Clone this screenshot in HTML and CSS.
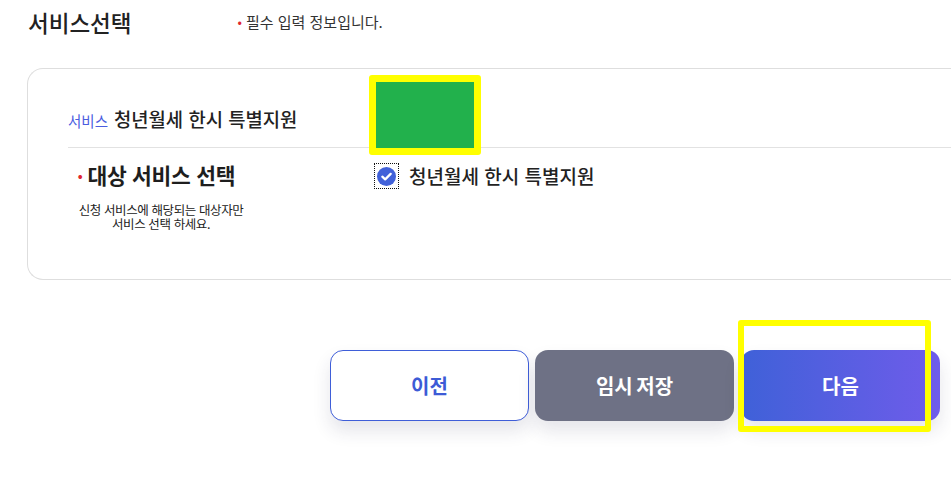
FILE: index.html
```html
<!DOCTYPE html>
<html lang="ko">
<head>
<meta charset="utf-8">
<title>서비스선택</title>
<link rel="stylesheet" href="styles.css">
</head>
<body>
<div class="page">
  <header class="head">
    <h1 class="title">서비스선택</h1>
    <p class="req"><span class="dot">•</span>필수 입력 정보입니다.</p>
  </header>

  <section class="card">
    <div class="svc"><span class="svc-tag">서비스</span>청년월세 한시 특별지원</div>
    <div class="row">
      <div class="label-col">
        <div class="label"><span class="dot">•</span>대상 서비스 선택</div>
        <p class="desc">신청 서비스에 해당되는 대상자만<br>서비스 선택 하세요.</p>
      </div>
      <label class="opt">
        <span class="chk">
          <svg viewBox="0 0 20 20" width="19" height="19" aria-hidden="true">
            <circle cx="10" cy="10" r="10" fill="#4161d9"/>
            <path d="M5.6 10.2 L8.6 13 L14.4 7.2" fill="none" stroke="#fff" stroke-width="2.4" stroke-linecap="round" stroke-linejoin="round"/>
          </svg>
        </span>
        <span class="opt-text">청년월세 한시 특별지원</span>
      </label>
    </div>
  </section>

  <div class="actions">
    <button class="btn btn-prev" type="button">이전</button>
    <button class="btn btn-save" type="button">임시 저장</button>
    <button class="btn btn-next" type="button">다음</button>
  </div>

  <div class="mark mark-green"></div>
  <div class="mark mark-next"></div>
</div>
</body>
</html>
```

FILE: styles.css
```css
html, body {
  margin: 0;
  padding: 0;
  overflow: hidden;
  background: #fff;
}
body {
  font-family: "Noto Sans CJK KR", "Noto Sans", sans-serif;
  color: #222;
}
.page {
  position: relative;
  width: 1000px;
  height: 479px;
  padding-left: 27px;
  box-sizing: border-box;
}
.head {
  display: flex;
  align-items: center;
  height: 44px;
}
.title {
  margin: 0 0 0 1px;
  font-size: 22.5px;
  font-weight: 500;
  line-height: 30px;
  color: #222;
}
.req {
  margin: 0 0 0 106px;
  font-size: 15px;
  color: #333;
  line-height: 20px;
}
.req .dot {
  color: #e0262f;
  margin-right: 4px;
  font-size: 13px;
  vertical-align: 1px;
}
.card {
  margin-top: 24px;
  height: 212px;
  border: 1px solid #dedede;
  border-right: 0;
  border-radius: 16px 0 0 16px;
  box-sizing: border-box;
  padding-left: 40px;
}
.svc {
  padding-top: 37px;
  padding-bottom: 13px;
  border-bottom: 1px solid #e2e2e2;
  font-size: 18.8px;
  font-weight: 500;
  line-height: 26px;
  color: #222;
}
.svc-tag {
  color: #4a5ddf;
  font-size: 14.5px;
  font-weight: 400;
  margin-right: 6px;
}
.row {
  display: flex;
  align-items: flex-start;
  padding-top: 14px;
}
.label-col {
  width: 186px;
  text-align: center;
}
.label {
  padding-right: 9px;
  font-size: 21.5px;
  font-weight: 700;
  line-height: 26px;
  letter-spacing: -0.3px;
  color: #1e1e1e;
}
.label .dot {
  color: #e0262f;
  font-size: 13px;
  margin-right: 5px;
  vertical-align: 3px;
}
.desc {
  margin: 14px 0 0;
  font-size: 12.5px;
  line-height: 14px;
  letter-spacing: -0.4px;
  color: #222;
}
.opt {
  display: flex;
  align-items: center;
  margin-left: 120px;
  margin-top: 1px;
}
.chk {
  display: flex;
  align-items: center;
  justify-content: center;
  width: 25px;
  height: 26px;
  box-sizing: border-box;
  border: 1px dotted #111;
}
.opt-text {
  margin-left: 10px;
  font-size: 19px;
  font-weight: 500;
  line-height: 26px;
  color: #222;
}
.actions {
  display: flex;
  gap: 6px;
  margin-top: 70px;
  padding-left: 303px;
}
.btn {
  width: 199px;
  height: 71px;
  border-radius: 13px;
  border: 0;
  font-family: inherit;
  font-size: 20px;
  font-weight: 700;
  box-shadow: 0 10px 18px rgba(40, 40, 80, 0.12);
  cursor: pointer;
}
.btn-prev {
  background: #fff;
  border: 1px solid #3f5ed8;
  color: #3d5bd6;
}
.btn-save {
  background: #6e7185;
  color: #fff;
  word-spacing: -2px;
}
.btn-next {
  margin-left: 1px;
  background: linear-gradient(90deg, #3f61d8 0%, #6f5cea 100%);
  color: #fff;
}
.mark {
  position: absolute;
  box-sizing: border-box;
  border: 7px solid #ffff00;
  border-radius: 3px;
}
.mark-green {
  left: 369px;
  top: 75px;
  width: 112px;
  height: 80px;
  background: #22b14c;
}
.mark-next {
  left: 738px;
  top: 320px;
  width: 193px;
  height: 112px;
  border-width: 6px;
}
```
